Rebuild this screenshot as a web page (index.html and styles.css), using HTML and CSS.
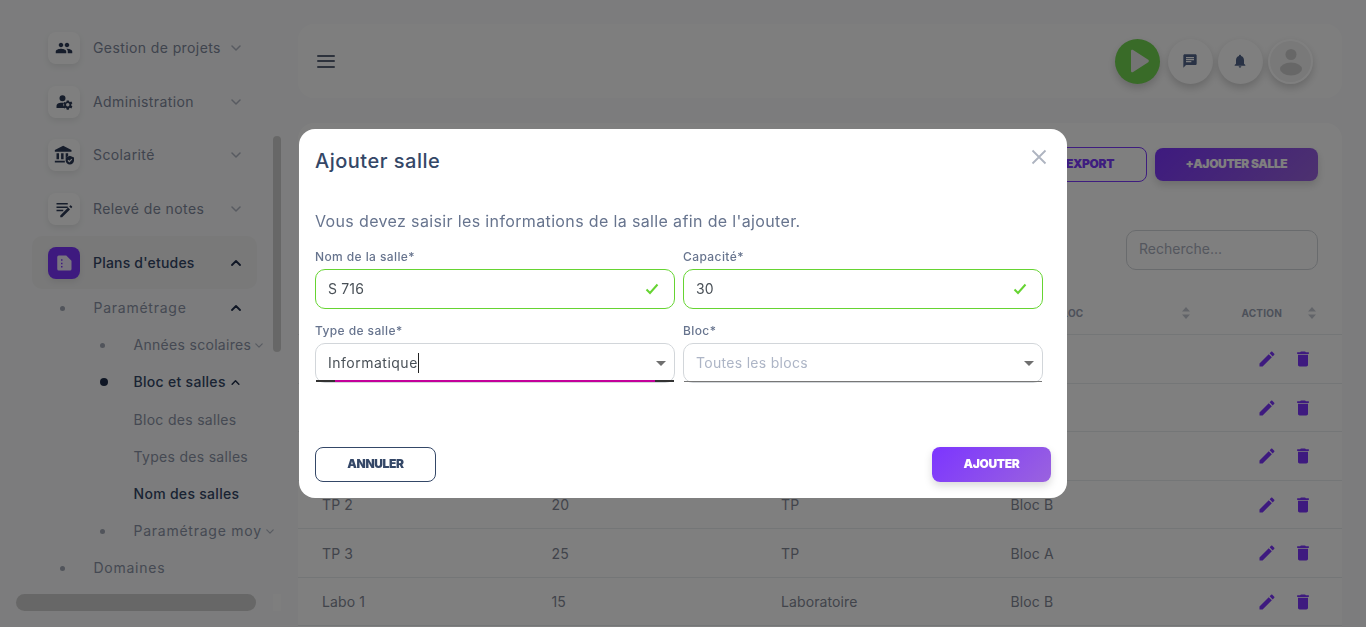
FILE: index.html
```html
<!DOCTYPE html>
<html lang="fr">
<head>
<meta charset="utf-8">
<title>Salles</title>
<link rel="stylesheet" href="styles.css">
</head>
<body>
<div class="page">
  <aside class="sidebar">
    <nav class="nav">
      <div class="nav-row"><span class="tile"><svg class="ic18" viewBox="0 0 24 24"><path d="M16 11c1.66 0 2.99-1.34 2.99-3S17.66 5 16 5c-1.66 0-3 1.34-3 3s1.34 3 3 3zm-8 0c1.66 0 2.99-1.34 2.99-3S9.66 5 8 5C6.34 5 5 6.34 5 8s1.34 3 3 3zm0 2c-2.33 0-7 1.17-7 3.5V19h14v-2.5c0-2.33-4.67-3.5-7-3.5zm8 0c-.29 0-.62.02-.97.05 1.16.84 1.97 1.97 1.97 3.45V19h6v-2.5c0-2.33-4.67-3.5-7-3.5z"/></svg></span><span class="nav-label">Gestion de projets</span><svg class="chev" viewBox="0 0 10 6"><path d="M1 1l4 4 4-4"/></svg></div>
      <div class="nav-row"><span class="tile"><svg class="ic18" viewBox="0 0 24 24"><path d="M10 11a4 4 0 1 0 0-8 4 4 0 0 0 0 8zM11 13H8c-3 0-6 1.5-6 4v3h11.4A6.5 6.5 0 0 1 11 15.500c0-.9.0-1.700 0-2.500z"/><path fill-rule="evenodd" d="M21.700 16.500c0-.2.1-.5.1-.8s0-.5-.1-.8l1.500-1.100-1.400-2.400-1.800.7c-.4-.3-.8-.6-1.300-.8L18.400 10h-2.800l-.3 1.800c-.5.2-.9.5-1.300.8l-1.800-.7-1.400 2.400 1.500 1.100c0 .3-.1.5-.1.800s0 .6.100.8l-1.500 1.100 1.400 2.400 1.800-.7c.4.3.8.600 1.300.800l.3 1.800h2.800l.3-1.800c.5-.2.9-.5 1.300-.8l1.800.7 1.400-2.400zM17 18a2.300 2.300 0 1 1 0-4.600 2.300 2.300 0 0 1 0 4.600z"/></svg></span><span class="nav-label">Administration</span><svg class="chev" viewBox="0 0 10 6"><path d="M1 1l4 4 4-4"/></svg></div>
      <div class="nav-row"><span class="tile"><svg class="ic20" viewBox="0 0 24 24"><path d="M11 1 1 6v2h20V6zM3 10h3v7H3zM8.500 10h3v7h-3zM14 10h3v3.500l-3 1.500zM1 19h12v2H1z"/><path d="M19 13l-5 2v3.500c0 2.500 2.200 4.500 5 5 2.800-.5 5-2.500 5-5V15z"/><path class="tick" d="M16.800 18.300l1.600 1.600 3-3"/></svg></span><span class="nav-label">Scolarité</span><svg class="chev" viewBox="0 0 10 6"><path d="M1 1l4 4 4-4"/></svg></div>
      <div class="nav-row"><span class="tile"><svg class="ic18" viewBox="0 0 24 24"><path d="M2 4h15v2H2zM2 8.500h15v2H2zM2 13h9v2H2zM7 20.500v2.500h2.500L20 12.500 17.500 10zM22.800 9.700c.3-.3.3-.7 0-1l-1.500-1.500c-.3-.3-.7-.3-1 0L19 8.500l2.500 2.500z"/></svg></span><span class="nav-label">Relevé de notes</span><svg class="chev" viewBox="0 0 10 6"><path d="M1 1l4 4 4-4"/></svg></div>
      <div class="nav-row active"><span class="tile tile-on"><svg class="ic18" viewBox="0 0 24 24"><path fill-rule="evenodd" d="M5 2h10l7 7v11a2 2 0 0 1-2 2H5a2 2 0 0 1-2-2V4a2 2 0 0 1 2-2zm3 5v2h2V7zm0 4.500v2h2v-2zm0 4.500v2h2v-2z"/></svg></span><span class="nav-label">Plans d'etudes</span><svg class="chev chev-on" viewBox="0 0 10 6"><path d="M1 5l4-4 4 4"/></svg></div>
      <div class="sub"><span class="dot"></span><span class="sub-label grow wide">Paramétrage</span><svg class="chev chev-on" viewBox="0 0 10 6"><path d="M1 5l4-4 4 4"/></svg></div>
      <div class="sub sub2"><span class="dot"></span><span class="sub-label">Années scolaires</span><svg class="chev small" viewBox="0 0 10 6"><path d="M1 1l4 4 4-4"/></svg></div>
      <div class="sub sub2"><span class="dot dot-on"></span><span class="sub-label on">Bloc et salles</span><svg class="chev chev-on small" viewBox="0 0 10 6"><path d="M1 5l4-4 4 4"/></svg></div>
      <div class="sub sub3"><span class="sub-label">Bloc des salles</span></div>
      <div class="sub sub3"><span class="sub-label">Types des salles</span></div>
      <div class="sub sub3"><span class="sub-label on">Nom des salles</span></div>
      <div class="sub sub2"><span class="dot"></span><span class="sub-label wide">Paramétrage moy</span><svg class="chev small" viewBox="0 0 10 6"><path d="M1 1l4 4 4-4"/></svg></div>
      <div class="sub"><span class="dot"></span><span class="sub-label wide">Domaines</span></div>
    </nav>
    <span class="vbar"></span>
    <span class="hbar"></span>
    <span class="hstub"></span>
  </aside>

  <main class="main">
    <header class="topbar">
      <button class="burger" aria-label="Menu"><span></span><span></span><span></span></button>
      <div class="top-actions">
        <span class="round play"><svg class="ic28" viewBox="0 0 24 24"><path d="M6 3.500c0-1 1-1.400 1.800-.9l13 8.400c.7.500.7 1.500 0 2l-13 8.400c-.8.500-1.800.1-1.800-.9z"/></svg></span>
        <span class="round"><svg class="ic16" viewBox="0 0 24 24"><path d="M20 2H4c-1.100 0-1.990.9-1.990 2L2 22l4-4h14c1.100 0 2-.9 2-2V4c0-1.100-.9-2-2-2zM6 9h12v2H6V9zm8 5H6v-2h8v2zm4-6H6V6h12v2z"/></svg></span>
        <span class="round"><svg class="ic16" viewBox="0 0 24 24"><path d="M12 22c1.100 0 2-.9 2-2h-4c0 1.100.89 2 2 2zm6-6v-5c0-3.070-1.640-5.640-4.500-6.320V4c0-.83-.67-1.500-1.500-1.500s-1.500.67-1.500 1.500v.68C7.630 5.360 6 7.920 6 11v5l-2 2v1h16v-1l-2-2z"/></svg></span>
        <span class="round avatar"><svg class="ic40" viewBox="0 0 40 40"><circle cx="20" cy="13.500" r="5.500"/><ellipse cx="20" cy="28" rx="11" ry="6.500"/></svg></span>
      </div>
    </header>

    <section class="card">
      <div class="card-actions">
        <button class="btn btn-line">EXPORT</button>
        <button class="btn btn-fill">+AJOUTER SALLE</button>
      </div>
      <div class="search-row"><div class="search">Recherche...</div></div>
      <div class="table">
        <div class="tr th">
          <span></span><span></span><span></span>
          <span class="th-sort">BLOC<svg class="sort" viewBox="0 0 8 12"><path d="M4 0l4 4.500H0zM4 12 0 7.500h8z"/></svg></span>
          <span class="th-act">ACTION<svg class="sort" viewBox="0 0 8 12"><path d="M4 0l4 4.500H0zM4 12 0 7.500h8z"/></svg></span>
        </div>
        <div class="tr"><span></span><span></span><span></span><span></span><span class="acts"><svg class="ic20 act" viewBox="0 0 24 24"><path d="M3 17.250V21h3.750L17.810 9.940l-3.750-3.750L3 17.250zM20.710 7.040c.39-.39.39-1.020 0-1.410l-2.340-2.340c-.39-.39-1.020-.39-1.410 0l-1.830 1.830 3.750 3.750 1.830-1.830z"/></svg><svg class="ic20 act" viewBox="0 0 24 24"><path d="M6 19c0 1.100.9 2 2 2h8c1.100 0 2-.9 2-2V7H6v12zM19 4h-3.500l-1-1h-5l-1 1H5v2h14V4z"/></svg></span></div>
        <div class="tr"><span></span><span></span><span></span><span></span><span class="acts"><svg class="ic20 act" viewBox="0 0 24 24"><path d="M3 17.250V21h3.750L17.810 9.940l-3.750-3.750L3 17.250zM20.710 7.040c.39-.39.39-1.020 0-1.410l-2.340-2.340c-.39-.39-1.020-.39-1.410 0l-1.830 1.830 3.750 3.750 1.830-1.830z"/></svg><svg class="ic20 act" viewBox="0 0 24 24"><path d="M6 19c0 1.100.9 2 2 2h8c1.100 0 2-.9 2-2V7H6v12zM19 4h-3.500l-1-1h-5l-1 1H5v2h14V4z"/></svg></span></div>
        <div class="tr"><span></span><span></span><span></span><span></span><span class="acts"><svg class="ic20 act" viewBox="0 0 24 24"><path d="M3 17.250V21h3.750L17.810 9.940l-3.750-3.750L3 17.250zM20.710 7.040c.39-.39.39-1.020 0-1.410l-2.340-2.340c-.39-.39-1.020-.39-1.410 0l-1.830 1.830 3.750 3.750 1.830-1.830z"/></svg><svg class="ic20 act" viewBox="0 0 24 24"><path d="M6 19c0 1.100.9 2 2 2h8c1.100 0 2-.9 2-2V7H6v12zM19 4h-3.500l-1-1h-5l-1 1H5v2h14V4z"/></svg></span></div>
        <div class="tr"><span>TP 2</span><span>20</span><span>TP</span><span>Bloc B</span><span class="acts"><svg class="ic20 act" viewBox="0 0 24 24"><path d="M3 17.250V21h3.750L17.810 9.940l-3.750-3.750L3 17.250zM20.710 7.040c.39-.39.39-1.020 0-1.410l-2.340-2.340c-.39-.39-1.020-.39-1.410 0l-1.830 1.830 3.750 3.750 1.830-1.830z"/></svg><svg class="ic20 act" viewBox="0 0 24 24"><path d="M6 19c0 1.100.9 2 2 2h8c1.100 0 2-.9 2-2V7H6v12zM19 4h-3.500l-1-1h-5l-1 1H5v2h14V4z"/></svg></span></div>
        <div class="tr"><span>TP 3</span><span>25</span><span>TP</span><span>Bloc A</span><span class="acts"><svg class="ic20 act" viewBox="0 0 24 24"><path d="M3 17.250V21h3.750L17.810 9.940l-3.750-3.750L3 17.250zM20.710 7.040c.39-.39.39-1.020 0-1.410l-2.340-2.340c-.39-.39-1.020-.39-1.410 0l-1.830 1.830 3.750 3.750 1.830-1.830z"/></svg><svg class="ic20 act" viewBox="0 0 24 24"><path d="M6 19c0 1.100.9 2 2 2h8c1.100 0 2-.9 2-2V7H6v12zM19 4h-3.500l-1-1h-5l-1 1H5v2h14V4z"/></svg></span></div>
        <div class="tr"><span>Labo 1</span><span>15</span><span>Laboratoire</span><span>Bloc B</span><span class="acts"><svg class="ic20 act" viewBox="0 0 24 24"><path d="M3 17.250V21h3.750L17.810 9.940l-3.750-3.750L3 17.250zM20.710 7.040c.39-.39.39-1.020 0-1.410l-2.340-2.340c-.39-.39-1.020-.39-1.410 0l-1.830 1.830 3.750 3.750 1.830-1.830z"/></svg><svg class="ic20 act" viewBox="0 0 24 24"><path d="M6 19c0 1.100.9 2 2 2h8c1.100 0 2-.9 2-2V7H6v12zM19 4h-3.500l-1-1h-5l-1 1H5v2h14V4z"/></svg></span></div>
      </div>
    </section>
  </main>
</div>

<div class="overlay">
  <div class="modal">
    <div class="modal-head">
      <h2 class="modal-title">Ajouter salle</h2>
      <svg class="close" viewBox="0 0 16 16"><path d="M1.500 1.500l13 13M14.500 1.500l-13 13"/></svg>
    </div>
    <p class="modal-desc">Vous devez saisir les informations de la salle afin de l'ajouter.</p>
    <div class="form">
      <div class="field">
        <label class="label">Nom de la salle*</label>
        <div class="input valid"><span class="value">S 716</span><svg class="check" viewBox="0 0 14 12"><path d="M1.500 6.500l3.500 3.500 7.500-8.500"/></svg></div>
      </div>
      <div class="field">
        <label class="label">Capacité*</label>
        <div class="input valid"><span class="value">30</span><svg class="check" viewBox="0 0 14 12"><path d="M1.500 6.500l3.500 3.500 7.500-8.500"/></svg></div>
      </div>
      <div class="field">
        <label class="label">Type de salle*</label>
        <div class="input select focused"><span class="value caret">Informatique</span><span class="arrow"></span><span class="line-pink"></span></div>
      </div>
      <div class="field">
        <label class="label">Bloc*</label>
        <div class="input select plain"><span class="value muted">Toutes les blocs</span><span class="arrow"></span></div>
      </div>
    </div>
    <div class="modal-foot">
      <button class="btn btn-cancel">ANNULER</button>
      <button class="btn btn-submit">AJOUTER</button>
    </div>
  </div>
</div>
</body>
</html>
```

FILE: styles.css
```css
* { box-sizing: border-box; }
html, body { margin: 0; height: 100%; overflow: hidden; }
body { font-family: Inter, "Noto Sans", "Liberation Sans", sans-serif; background: #f8f9fa; color: #67748e; }
svg { fill: currentColor; display: block; }
button { font-family: inherit; cursor: pointer; }

.page { display: grid; grid-template-columns: 298px 1fr; height: 627px; }

/* Sidebar */
.sidebar { position: relative; overflow: hidden; padding-top: 21px; }
.nav { display: flex; flex-direction: column; width: 285px; }
.nav-row { display: flex; align-items: center; height: 53.700px; margin-left: 32px; width: 225px; padding: 0 16px; border-radius: 10px; }
.nav-row.active { background: #f2f2f3; }
.tile { width: 32px; height: 32px; flex: none; display: flex; align-items: center; justify-content: center; border-radius: 8px; background: #fff; color: #2d3a56; box-shadow: 0 3px 6px rgba(0,0,0,.08); margin-right: 13px; }
.tile-on { background: #7c35ff; color: #f3eaff; }
.nav-label { flex: 1; font-size: 14px; letter-spacing: .4px; color: #7f889c; white-space: nowrap; padding-bottom: 1px; }
.active .nav-label { color: #344767; font-weight: 500; letter-spacing: .2px; }
.chev { width: 10px; height: 6px; flex: none; fill: none; stroke: #b0b6c3; stroke-width: 1.500; stroke-linecap: round; stroke-linejoin: round; }
.chev-on { stroke: #1f2d4a; stroke-width: 1.800; }
.chev.small { margin-left: 4px; width: 8px; height: 5px; }
.chev.chev-on.small { width: 9px; margin-left: 5px; }
.sub { display: flex; align-items: center; height: 37.200px; padding-left: 60px; width: 285px; font-size: 14px; padding-right: 44px; }
.sub2 { padding-left: 100px; padding-right: 0; }
.sub3 { padding-left: 133.500px; padding-right: 0; }
.dot { width: 5px; height: 5px; border-radius: 50%; background: #a2a8b6; flex: none; margin-right: 28.500px; }
.dot-on { width: 8px; height: 8px; background: #1f2d4a; margin-right: 25.500px; }
.sub-label { color: #8b93a6; white-space: nowrap; letter-spacing: .3px; padding-bottom: 1px; }
.sub-label.wide { letter-spacing: .75px; }
.sub-label.on { color: #344767; font-weight: 500; }
.grow { flex: 1; }
.vbar { position: absolute; left: 273px; top: 136px; width: 8px; height: 216px; border-radius: 4px; background: #cfcfcf; }
.hbar { position: absolute; left: 16px; top: 594px; width: 240px; height: 17px; border-radius: 9px; background: #cfcfcf; }
.hstub { position: absolute; left: 273px; top: 594px; width: 8px; height: 17px; background: #fcfcfc; }

/* Main */
.main { padding: 24px 24px 0 0; display: flex; flex-direction: column; gap: 25px; min-width: 0; }
.topbar { height: 74px; flex: none; border-radius: 16px; display: flex; align-items: center; justify-content: space-between; padding: 0 29px 0 19px; background: #fdfdfd; }
.burger { display: flex; flex-direction: column; gap: 3.500px; border: 0; background: none; padding: 0; width: 18px; }
.burger span { display: block; height: 2px; background: #5a6478; border-radius: 1px; }
.top-actions { display: flex; gap: 5px; align-items: center; }
.round { width: 45px; height: 45px; border-radius: 50%; background: #fff; color: #52658a; display: flex; align-items: center; justify-content: center; box-shadow: 0 4px 8px rgba(0,0,0,.18); }
.round .ic16 { margin-left: -1px; }
.play { background: #72d650; color: #e9e9e9; margin-right: 3px; }
.avatar { background: #f2f2f2; border: 2px solid #fff; color: #cfcfcf; }
.ic16 { width: 16px; height: 16px; }
.ic18 { width: 18px; height: 18px; }
.ic20 { width: 20px; height: 20px; }
.ic28 { width: 28px; height: 28px; }
.ic40 { width: 40px; height: 40px; }
.tick { fill: none; stroke: #fff; stroke-width: 1.400; }

.card { flex: 1; background: #fff; border-radius: 16px 16px 0 0; padding-top: 24px; min-height: 0; overflow: hidden; }
.card-actions { display: flex; justify-content: flex-end; gap: 8px; padding-right: 24px; align-items: center; height: 35px; }
.btn { font-size: 12px; font-weight: 900; border-radius: 8px; letter-spacing: -.35px; padding: 0 0 2px; }
.btn-line { width: 114px; height: 35px; background: #fff; color: #7c3aff; border: 1px solid #7c3aff; }
.btn-fill { width: 163px; height: 33px; color: #fff; border: 0; background: linear-gradient(135deg, #7c35ff, #9a63de); box-shadow: 0 4px 8px rgba(0,0,0,.15); }
.search-row { display: flex; justify-content: flex-end; padding: 48px 24px 0 0; }
.search { width: 192px; height: 40px; border: 1px solid #d2d6da; border-radius: 10px; padding: 0 12px; font-size: 14px; line-height: 36px; color: #a9aebc; }
.tr { display: grid; grid-template-columns: 24px 229.500px 229.500px 229.500px 231px 1fr; height: 48.500px; padding-top: 1px; align-items: center; border-bottom: 1px solid #e9ecef; font-size: 14px; color: #838896; letter-spacing: .1px; }
.tr::before { content: ""; }
.th { height: 65px; padding-top: 0; align-items: end; padding-bottom: 15px; font-size: 10px; font-weight: 700; color: #9aa2b4; letter-spacing: .2px; }
.th-sort { display: flex; align-items: center; justify-content: space-between; width: 179px; padding-left: 45px; }
.th-act { display: flex; align-items: center; gap: 26px; }
.sort { width: 8px; height: 12px; color: #c5c9d2; }
.acts { display: flex; gap: 16px; padding-left: 15px; color: #7c35ff; }
.act { flex: none; }

/* Modal */
.overlay { position: fixed; inset: 0; background: rgba(0,0,0,.5); backdrop-filter: blur(.6px); display: flex; align-items: center; justify-content: center; }
.modal { width: 768px; height: 369px; background: #fff; border-radius: 16px; padding: 16px; display: flex; flex-direction: column; }
.modal-head { display: flex; justify-content: space-between; align-items: flex-start; height: 32px; padding-right: 4px; }
.modal-title { margin: 0; font-size: 20px; font-weight: 500; line-height: 32px; color: #344767; letter-spacing: .5px; }
.close { width: 16px; height: 16px; margin: 4px 0 0; fill: none; stroke: #aeb4c0; stroke-width: 1.800; }
.modal-desc { margin: 32px 0 0; font-size: 16px; line-height: 24px; color: #67748e; letter-spacing: .36px; }
.form { display: grid; grid-template-columns: 360px 360px; column-gap: 8px; row-gap: 13px; margin-top: 15px; }
.label { display: block; font-size: 12px; font-weight: 500; line-height: 18px; color: #67748e; margin-bottom: 3px; letter-spacing: .4px; }
.input { position: relative; height: 40px; border: 1px solid #d2d6da; border-radius: 10px; display: flex; align-items: center; justify-content: space-between; padding: 0 12px; }
.valid { border-color: #66d432; padding-right: 15px; }
.value { font-size: 14px; color: #495057; letter-spacing: .15px; padding-bottom: 1px; }
.muted { color: #adb5c6; letter-spacing: .3px; }
.check { width: 14px; height: 12px; fill: none; stroke: #66d432; stroke-width: 2; }
.arrow { width: 0; height: 0; border: 5px solid transparent; border-top: 5px solid #6f6f6f; border-bottom: 0; margin-right: -4px; }
.caret { border-right: 1px solid #222; line-height: 20px; letter-spacing: .5px; padding-bottom: 0; }
.focused::after, .plain::after { content: ""; position: absolute; left: 0; right: 0; bottom: 0; height: 2px; background: #333; }
.plain::after { height: 1px; background: #777; }
.line-pink { position: absolute; left: 19px; right: 19px; bottom: 0; height: 2px; background: #c4009a; z-index: 1; }
.modal-foot { margin-top: auto; display: flex; justify-content: space-between; }
.btn-cancel { width: 121px; height: 35px; background: #fff; color: #344767; border: 1px solid #344767; }
.btn-submit { width: 119px; height: 35px; color: #fff; border: 0; background: linear-gradient(135deg, #7c35ff, #9a63de); box-shadow: 0 4px 8px rgba(0,0,0,.15); }
```
